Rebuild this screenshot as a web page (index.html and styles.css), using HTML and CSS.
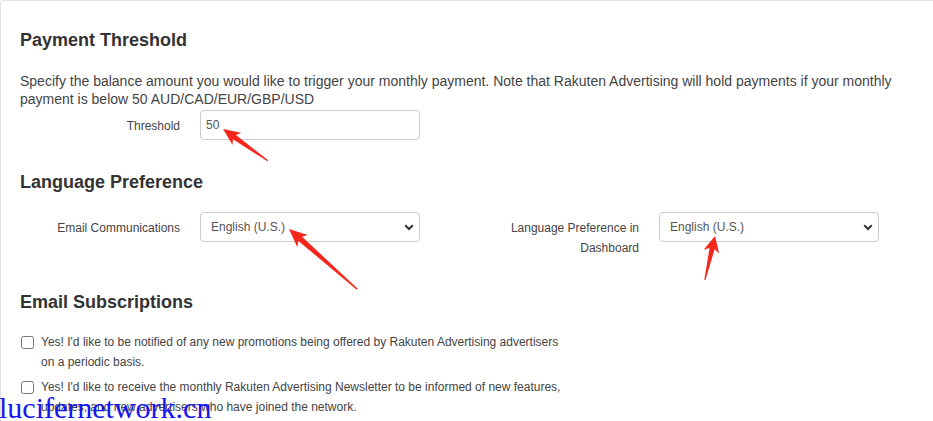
FILE: index.html
```html
<!DOCTYPE html>
<html lang="en">
<head>
<meta charset="utf-8">
<title>Account Settings</title>
<link rel="stylesheet" href="styles.css">
</head>
<body>
<div class="page">
  <div class="card">
    <section class="section">
      <h2 class="section-title">Payment Threshold</h2>
      <p class="section-text">Specify the balance amount you would like to trigger your monthly payment. Note that Rakuten Advertising will hold payments if your monthly payment is below 50 AUD/CAD/EUR/GBP/USD</p>
      <div class="field field-threshold">
        <label class="field-label" for="threshold">Threshold</label>
        <input class="text-input" id="threshold" type="text" value="50">
      </div>
    </section>

    <section class="section section-lang">
      <h2 class="section-title">Language Preference</h2>
      <div class="two-col">
        <div class="field">
          <label class="field-label" for="email-lang">Email Communications</label>
          <div class="select-wrap">
            <select class="select" id="email-lang"><option>English (U.S.)</option></select>
            <svg class="chevron" width="10" height="7" viewBox="0 0 10 7"><path d="M1.2 1.3 L5 5 L8.8 1.3" fill="none" stroke="#333" stroke-width="2"/></svg>
          </div>
        </div>
        <div class="field">
          <label class="field-label" for="dash-lang">Language Preference in Dashboard</label>
          <div class="select-wrap">
            <select class="select" id="dash-lang"><option>English (U.S.)</option></select>
            <svg class="chevron" width="10" height="7" viewBox="0 0 10 7"><path d="M1.2 1.3 L5 5 L8.8 1.3" fill="none" stroke="#333" stroke-width="2"/></svg>
          </div>
        </div>
      </div>
    </section>

    <section class="section section-subs">
      <h2 class="section-title">Email Subscriptions</h2>
      <ul class="checks">
        <li class="check-item">
          <input class="checkbox" type="checkbox" id="sub1">
          <label class="check-text" for="sub1">Yes! I'd like to be notified of any new promotions being offered by Rakuten Advertising advertisers on a periodic basis.</label>
        </li>
        <li class="check-item">
          <input class="checkbox" type="checkbox" id="sub2">
          <label class="check-text" for="sub2">Yes! I'd like to receive the monthly Rakuten Advertising Newsletter to be informed of new features, updates, and new advertisers who have joined the network.</label>
        </li>
      </ul>
    </section>
  </div>

  <svg class="annotations" width="933" height="421" viewBox="0 0 933 421">
    <g fill="#f5261b">
      <polygon transform="translate(223,129) rotate(215.4)" points="0,0 -17,-7.5 -14,-2.6 -55,-0.6 -55,0.6 -14,2.6 -17,7.5"/>
      <polygon transform="translate(289,229) rotate(221.4)" points="0,0 -18,-8 -15,-2.8 -91,-0.7 -91,0.7 -15,2.8 -18,8"/>
      <polygon transform="translate(715,236) rotate(283)" points="0,0 -16,-8 -13,-2.6 -45,-0.6 -45,0.6 -13,2.6 -16,8"/>
    </g>
  </svg>
  <div class="watermark">lucifernetwork.cn</div>
</div>
</body>
</html>
```

FILE: styles.css
```css
* { box-sizing: border-box; }

html, body {
  margin: 0;
  padding: 0;
  background: #fff;
  overflow: hidden;
}

body {
  font-family: "Liberation Sans", Arial, sans-serif;
  color: #444;
  width: 933px;
  height: 421px;
}

.page {
  position: relative;
  width: 933px;
  height: 421px;
  overflow: hidden;
}

.card {
  width: 1000px;
  border: 1px solid #e2e2e2;
  border-radius: 4px;
  padding: 29px 0 40px 19px;
}

.section-title {
  margin: 0;
  font-size: 18px;
  line-height: 20px;
  font-weight: bold;
  color: #333;
}

.section-text {
  width: 895px;
  margin: 22px 0 0;
  font-size: 14px;
  line-height: 18px;
  color: #444;
}

.field {
  display: grid;
  grid-template-columns: 160px 220px;
  column-gap: 20px;
  align-items: start;
}

.field-threshold {
  margin-top: 2px;
}

.field-label {
  padding-top: 6px;
  text-align: right;
  font-size: 12px;
  line-height: 20px;
  color: #444;
}

.text-input {
  height: 30px;
  width: 220px;
  margin: 0;
  padding: 0 5px;
  border: 1px solid #ccc;
  border-radius: 4px;
  font-family: "Liberation Sans", Arial, sans-serif;
  font-size: 12px;
  color: #555;
  background: #fff;
  outline: none;
}

.section-lang {
  margin-top: 32px;
}

.two-col {
  display: grid;
  grid-template-columns: 459px 400px;
  margin-top: 20px;
}

.select-wrap {
  position: relative;
  width: 220px;
  height: 30px;
}

.select {
  appearance: none;
  -webkit-appearance: none;
  width: 220px;
  height: 30px;
  margin: 0;
  padding: 0 24px 0 10px;
  border: 1px solid #ccc;
  border-radius: 4px;
  background: #fff;
  font-family: "Liberation Sans", Arial, sans-serif;
  font-size: 12px;
  color: #555;
  outline: none;
}

.chevron {
  position: absolute;
  right: 6px;
  top: 12px;
  pointer-events: none;
}

.section-subs {
  margin-top: 34px;
}

.checks {
  list-style: none;
  margin: 20px 0 0;
  padding: 0;
}

.check-item {
  display: flex;
  align-items: flex-start;
  column-gap: 7px;
}

.check-item + .check-item {
  margin-top: 5px;
}

.checkbox {
  width: 13px;
  height: 13px;
  margin: 4px 0 0 1px;
  flex: none;
}

.check-text {
  width: 525px;
  font-size: 12px;
  line-height: 20px;
  color: #444;
}

.annotations {
  position: absolute;
  left: 0;
  top: 0;
  pointer-events: none;
}

.watermark {
  position: absolute;
  left: -1px;
  top: 393px;
  font-family: "Liberation Serif", "Times New Roman", serif;
  font-size: 30px;
  line-height: 30px;
  color: #1616f0;
  white-space: nowrap;
  pointer-events: none;
}
```
